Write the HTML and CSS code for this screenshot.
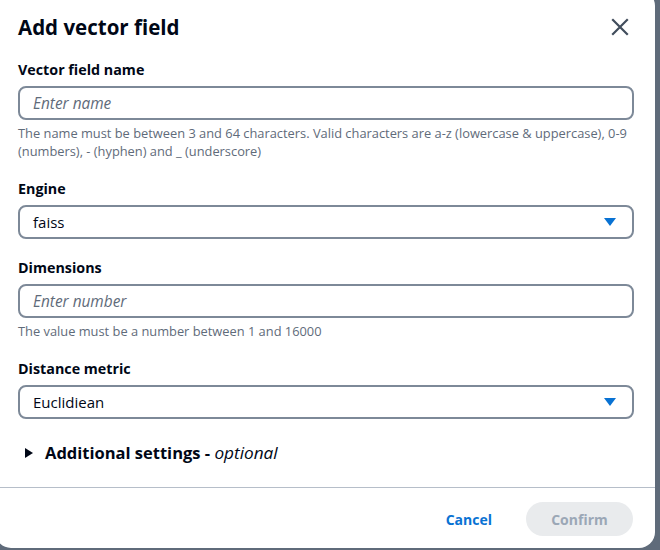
FILE: index.html
```html
<!DOCTYPE html>
<html>
<head>
<meta charset="utf-8">
<link rel="stylesheet" href="styles.css">
</head>
<body>
<div class="modal">
  <div class="header">
    <h2 class="title">Add vector field</h2>
    <button class="close" aria-label="Close">
      <svg width="18" height="18" viewBox="0 0 18 18"><path d="M2 2 L16 16 M16 2 L2 16" stroke="#414d5c" stroke-width="2.2" fill="none" stroke-linecap="square"/></svg>
    </button>
  </div>
  <div class="body">
    <div class="field">
      <div class="label">Vector field name</div>
      <div class="control"><span class="placeholder">Enter name</span></div>
      <div class="help">The name must be between 3 and 64 characters. Valid characters are a-z (lowercase &amp; uppercase), 0-9 (numbers), - (hyphen) and _ (underscore)</div>
    </div>
    <div class="field">
      <div class="label">Engine</div>
      <div class="control select"><span class="value">faiss</span><span class="caret"></span></div>
    </div>
    <div class="field">
      <div class="label">Dimensions</div>
      <div class="control"><span class="placeholder">Enter number</span></div>
      <div class="help">The value must be a number between 1 and 16000</div>
    </div>
    <div class="field">
      <div class="label">Distance metric</div>
      <div class="control select"><span class="value">Euclidiean</span><span class="caret"></span></div>
    </div>
    <div class="expander">
      <span class="tri"></span>
      <span class="exp-text">Additional settings - <em>optional</em></span>
    </div>
  </div>
  <div class="footer">
    <button class="btn-link">Cancel</button>
    <button class="btn-primary" disabled>Confirm</button>
  </div>
</div>
</body>
</html>
```

FILE: styles.css
```css
html, body {
  margin: 0;
  padding: 0;
}
body {
  background: #5f6b7a;
  width: 660px;
  height: 550px;
  overflow: hidden;
  font-family: "Open Sans", "Noto Sans", sans-serif;
  color: #000716;
}
.modal {
  margin-top: -10px;
  margin-left: -5px;
  width: 660px;
  height: 558px;
  background: #ffffff;
  border-radius: 16px;
  display: flex;
  flex-direction: column;
  box-sizing: border-box;
}
.header {
  display: flex;
  align-items: center;
  justify-content: space-between;
  padding: 25px 23px 0 23px;
}
.title {
  margin: 0;
  font-size: 20.5px;
  line-height: 24px;
  font-weight: 700;
}
.close {
  border: none;
  background: none;
  padding: 0;
  margin-right: 3px;
  width: 18px;
  height: 18px;
  display: flex;
}
.body {
  padding: 20px 21px 0 23px;
  display: flex;
  flex-direction: column;
  gap: 18px;
}
.field {
  display: flex;
  flex-direction: column;
}
.label {
  font-size: 14.3px;
  line-height: 22px;
  font-weight: 700;
  margin-bottom: 5px;
}
.control {
  height: 34px;
  box-sizing: border-box;
  border: 2px solid #7d8998;
  border-radius: 8px;
  display: flex;
  align-items: center;
  padding: 0 22px 0 13px;
  font-size: 15px;
}
.placeholder {
  font-style: italic;
  color: #5f6b7a;
  font-size: 15.4px;
}
.value {
  flex: 1;
}
.caret {
  width: 0;
  height: 0;
  border-left: 6px solid transparent;
  border-right: 6px solid transparent;
  border-top: 8px solid #0972d3;
}
.select {
  padding-right: 16px;
}
.help {
  font-size: 12.85px;
  line-height: 18px;
  color: #5f6b7a;
  margin-top: 4px;
}
.expander {
  display: flex;
  align-items: center;
  margin-top: 5px;
  padding-left: 7px;
  height: 22px;
}
.tri {
  width: 0;
  height: 0;
  border-top: 5px solid transparent;
  border-bottom: 5px solid transparent;
  border-left: 8px solid #000716;
  margin-right: 12px;
}
.exp-text {
  font-size: 16.5px;
  font-weight: 700;
  line-height: 22px;
}
.exp-text em {
  font-weight: 500;
  font-style: italic;
  font-size: 17.2px;
}
.footer {
  margin-top: 23px;
  border-top: 1px solid #b6bec9;
  display: flex;
  justify-content: flex-end;
  align-items: center;
  gap: 34px;
  padding: 14px 22px 0 0;
}
.btn-link {
  border: none;
  background: none;
  font-family: inherit;
  font-size: 14px;
  font-weight: 700;
  color: #0972d3;
  padding: 0;
}
.btn-primary {
  border: none;
  background: #e9ebed;
  color: #9ba7b6;
  font-family: inherit;
  font-size: 14px;
  font-weight: 700;
  height: 34px;
  width: 107px;
  border-radius: 20px;
  padding: 0;
}
```
